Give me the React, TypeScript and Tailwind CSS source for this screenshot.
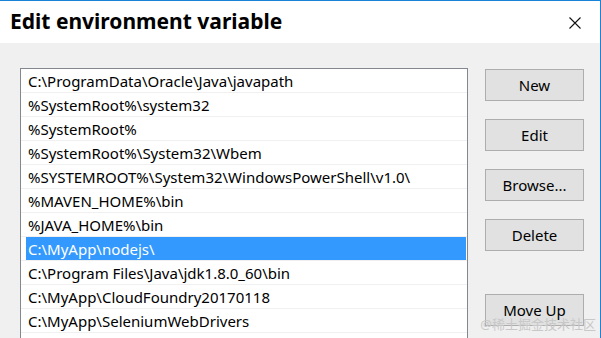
const paths = [
  'C:\\ProgramData\\Oracle\\Java\\javapath',
  '%SystemRoot%\\system32',
  '%SystemRoot%',
  '%SystemRoot%\\System32\\Wbem',
  '%SYSTEMROOT%\\System32\\WindowsPowerShell\\v1.0\\',
  '%MAVEN_HOME%\\bin',
  '%JAVA_HOME%\\bin',
  'C:\\MyApp\\nodejs\\',
  'C:\\Program Files\\Java\\jdk1.8.0_60\\bin',
  'C:\\MyApp\\CloudFoundry20170118',
  'C:\\MyApp\\SeleniumWebDrivers',
  '',
];

const buttons = ['New', 'Edit', 'Browse...', 'Delete'];

function DialogButton({ label }: { label: string }) {
  return (
    <button className="flex h-[32px] w-[99px] items-center justify-center border border-[#adadad] bg-[#e1e1e1] text-[15px] text-black">
      {label}
    </button>
  );
}

export default function App() {
  const selected = 7;

  return (
    <div
      className="relative flex h-[338px] w-[601px] flex-col overflow-hidden border-t border-r border-[#1883d7] bg-[#f0f0f0] text-black"
      style={{ fontFamily: '"Noto Sans", "Open Sans", sans-serif' }}
    >
      <div className="flex h-[42px] shrink-0 items-center justify-between bg-white pl-[10px] pr-[19px]">
        <h1 className="pb-px text-[21px] font-bold leading-none">Edit environment variable</h1>
        <svg width="12" height="12" viewBox="0 0 12 12" className="mt-[2px]">
          <path d="M0.5 0.5 L11.5 11.5 M11.5 0.5 L0.5 11.5" stroke="#111" strokeWidth="1.1" fill="none" />
        </svg>
      </div>

      <div className="flex gap-[17px] pl-[20px] pt-[25px]">
        <div className="h-[300px] w-[448px] shrink-0 border border-b-0 border-[#828790] bg-white">
          {paths.map((p, i) => (
            <div key={i} className="h-[24px] border-b border-[#f0f0f0] pl-[5px] pr-px">
              <div
                className={
                  i === selected
                    ? 'flex h-[23px] items-center bg-[#3399ff] pl-[2px] pt-px text-[15px] text-white'
                    : 'flex h-[23px] items-center pl-[2px] pt-px text-[15px]'
                }
              >
                {p}
              </div>
            </div>
          ))}
        </div>

        <div className="flex flex-col pt-px">
          <div className="flex flex-col gap-[18px]">
            {buttons.map((b) => (
              <DialogButton key={b} label={b} />
            ))}
          </div>
          <div className="mt-[43px]">
            <DialogButton label="Move Up" />
          </div>
        </div>
      </div>

      <span
        className="absolute bottom-[4px] right-[4px] text-[13px] text-[#c8c8c8]"
        style={{ fontFamily: '"Noto Sans", "Noto Sans CJK SC", sans-serif' }}
      >
        @稀土掘金技术社区
      </span>
    </div>
  );
}
